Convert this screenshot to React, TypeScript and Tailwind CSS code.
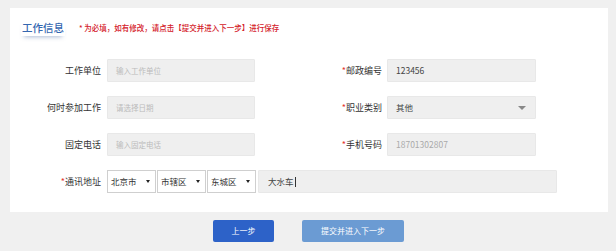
import React from "react";

const FONT = { fontFamily: '"Noto Sans CJK SC", "Noto Sans", sans-serif' };

const Label = ({ text, required, width }: { text: string; required?: boolean; width: string }) => (
  <div className={`${width} shrink-0 text-right text-[9px] leading-[23px] text-[#333]`}>
    {required && <span className="text-[#e5322d]">*</span>}
    {text}
  </div>
);

const Field = ({
  width,
  value,
  placeholder,
  muted,
  caret,
}: {
  width: string;
  value?: string;
  placeholder?: string;
  muted?: boolean;
  caret?: boolean;
}) => (
  <div
    className={`${width} h-[23px] shrink-0 flex items-center justify-between pl-[8px] pr-[9px] bg-[#efefef] border border-[#e8e8e8] rounded-[1px]`}
  >
    {value ? (
      <span className={`text-[8.5px] ${muted ? "text-[#aaa]" : "text-[#444]"}`}>{value}</span>
    ) : (
      <span className="text-[7.5px] text-[#bbb]">{placeholder}</span>
    )}
    {caret && (
      <span className="w-0 h-0 border-l-[4px] border-r-[4px] border-t-[4px] border-l-transparent border-r-transparent border-t-[#888]" />
    )}
  </div>
);

const Select = ({ text }: { text: string }) => (
  <div className="w-[49px] h-[23px] shrink-0 flex items-center justify-between pl-[3px] pr-[5px] bg-white border border-[#cfcfcf]">
    <span className="text-[8.5px] text-[#333]">{text}</span>
    <span className="w-0 h-0 border-l-[2.5px] border-r-[2.5px] border-t-[3px] border-l-transparent border-r-transparent border-t-[#222]" />
  </div>
);

export default function App() {
  return (
    <div style={FONT} className="w-[616px] h-[251px] bg-[#f0f0f0] pt-[8px] overflow-hidden">
      <div className="ml-[10px] w-[598px] h-[204px] bg-white">
        <div className="flex items-center pt-[12px] pl-[11px]">
          <div className="text-[10.5px] leading-[16px] font-medium text-[#3567b0] px-[1px] shadow-[0_4px_4px_-3px_rgba(90,120,170,0.5)]">
            工作信息
          </div>
          <div className="ml-[14px] text-[7.5px] leading-[16px] font-medium text-[#d4202a]">
            * 为必填，如有修改，请点击【提交并进入下一步】进行保存
          </div>
        </div>

        <div className="mt-[23px] flex flex-col gap-[14px]">
          <div className="flex">
            <Label text="工作单位" width="w-[91px]" />
            <div className="w-[6px]" />
            <Field width="w-[148px]" placeholder="输入工作单位" />
            <Label text="邮政编号" required width="w-[127px]" />
            <div className="w-[5px]" />
            <Field width="w-[149px]" value="123456" />
          </div>
          <div className="flex">
            <Label text="何时参加工作" width="w-[91px]" />
            <div className="w-[6px]" />
            <Field width="w-[148px]" placeholder="请选择日期" />
            <Label text="职业类别" required width="w-[127px]" />
            <div className="w-[5px]" />
            <Field width="w-[149px]" value="其他" caret />
          </div>
          <div className="flex">
            <Label text="固定电话" width="w-[91px]" />
            <div className="w-[6px]" />
            <Field width="w-[148px]" placeholder="输入固定电话" />
            <Label text="手机号码" required width="w-[127px]" />
            <div className="w-[5px]" />
            <Field width="w-[149px]" value="18701302807" muted />
          </div>
          <div className="flex">
            <Label text="通讯地址" required width="w-[91px]" />
            <div className="w-[6px]" />
            <div className="flex gap-[1px]">
              <Select text="北京市" />
              <Select text="市辖区" />
              <Select text="东城区" />
            </div>
            <div className="w-[2px]" />
            <div className="w-[299px] h-[23px] flex items-center pl-[9px] bg-[#efefef] border border-[#e8e8e8] rounded-[1px]">
              <span className="text-[8.5px] text-[#444]">大水车</span>
              <span className="ml-[1px] w-[1px] h-[10px] bg-[#333]" />
            </div>
          </div>
        </div>
      </div>

      <div className="mt-[8px] flex">
        <div className="ml-[213px] w-[61px] h-[22px] flex items-center justify-center rounded-[2px] bg-[#2d62c8] text-white text-[8px]">
          上一步
        </div>
        <div className="ml-[28px] w-[102px] h-[22px] flex items-center justify-center rounded-[2px] bg-[#6b9bd3] text-white text-[8px]">
          提交并进入下一步
        </div>
      </div>
    </div>
  );
}
